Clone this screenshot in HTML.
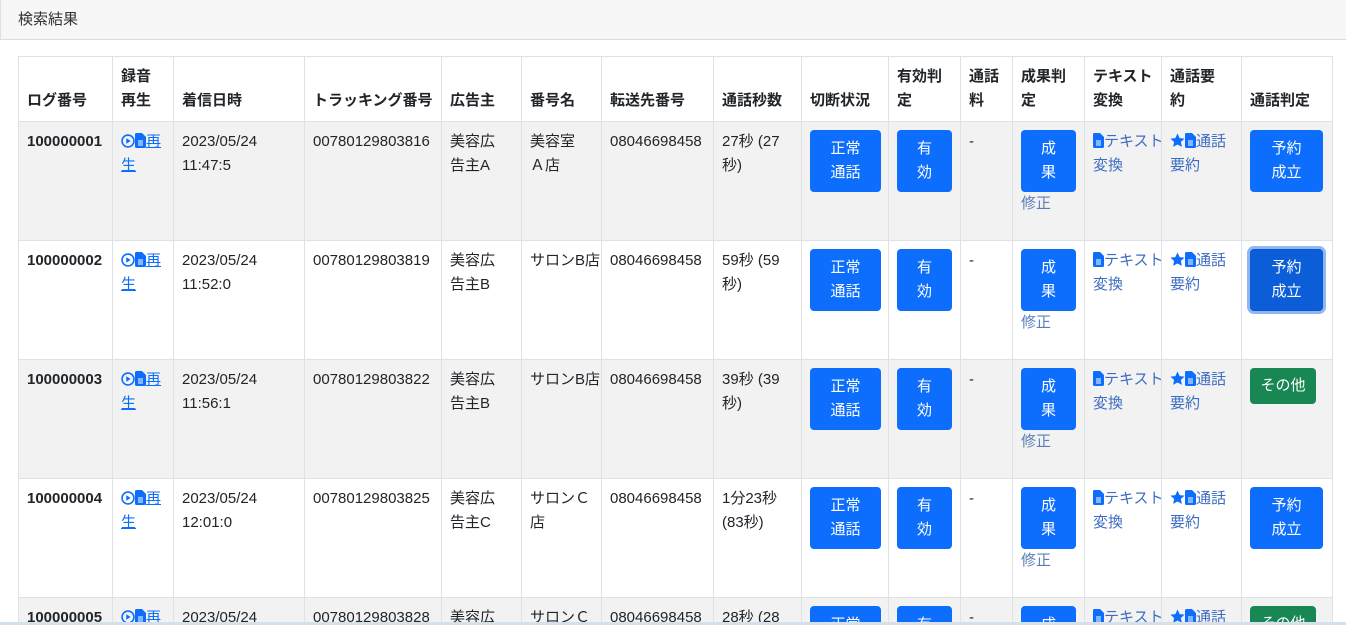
<!DOCTYPE html>
<html><head><meta charset="utf-8"><style>
*{box-sizing:border-box}
html,body{margin:0;width:1346px;height:625px;overflow:hidden}
body{position:relative;background:#fff;font-family:"Liberation Sans","Noto Sans CJK JP",sans-serif;font-size:15px;color:#212529}
.hd{height:40px;background:#f7f7f7;border-bottom:1px solid #dcdcdc;border-left:1px solid #e0e0e0;padding:9px 17px;font-size:15px;line-height:22px;color:#333}
table{position:absolute;left:18px;top:56px;border-collapse:collapse;table-layout:fixed;width:1314px}
td,th{border:1px solid #dee2e6;padding:8px 8px;vertical-align:top;line-height:24px;text-align:left;white-space:nowrap;overflow:hidden}
th{vertical-align:bottom;font-weight:bold;height:65px}
tr.r td{height:119px}
tr.o td{background:#f2f2f2}
td.b{font-weight:bold}
a{color:#0d6efd}
.l{color:#3e6cc0;text-decoration:none}
.m{color:#5b7fb8}
.btn{display:inline-block;background:#0d6efd;color:#fff;border-radius:4px;text-align:center;padding:6px 0;line-height:24px;border:1px solid #0d6efd}
.w71{width:71px}.w55{width:55px}.w73{width:73px}
.g{background:#198754;border-color:#198754;width:66px;padding:5px 0}
.f{background:#0b5ed7;border-color:#0a58ca;box-shadow:0 0 0 3px #8fb6f5}
svg{vertical-align:-2px}
.bar{position:absolute;left:0;top:622px;width:1346px;height:3px;background:#d5e1ea}
</style></head><body>
<div class="hd">検索結果</div>
<table>
<colgroup><col style="width:94px"><col style="width:61px"><col style="width:131px"><col style="width:137px"><col style="width:80px"><col style="width:80px"><col style="width:112px"><col style="width:88px"><col style="width:87px"><col style="width:72px"><col style="width:52px"><col style="width:72px"><col style="width:77px"><col style="width:80px"><col style="width:91px"></colgroup>
<tr><th>ログ番号</th><th>録音<br>再生</th><th>着信日時</th><th>トラッキング番号</th><th>広告主</th><th>番号名</th><th>転送先番号</th><th>通話秒数</th><th>切断状況</th><th>有効判<br>定</th><th>通話<br>料</th><th>成果判<br>定</th><th>テキスト<br>変換</th><th>通話要<br>約</th><th>通話判定</th></tr>
<tr class="r o"><td class="b">100000001</td><td><a href="#"><svg width="14" height="14" viewBox="0 0 16 16"><circle cx="8" cy="8" r="6.8" fill="none" stroke="#0d6efd" stroke-width="1.8"/><path d="M6 4.8v6.4L11 8z" fill="#0d6efd"/></svg><svg width="11" height="15" viewBox="0 0 11 15"><path d="M1.5 0h5.5l4 4v9.5a1.5 1.5 0 0 1-1.5 1.5h-8A1.5 1.5 0 0 1 0 13.5V1.5A1.5 1.5 0 0 1 1.5 0z" fill="#0d6efd"/><path d="M3 8h5M3 10h5M3 12h5" stroke="#fff" stroke-width="1"/></svg>再<br>生</a></td><td>2023/05/24<br>11:47:5</td><td>00780129803816</td><td>美容広<br>告主A</td><td>美容室<br>Ａ店</td><td>08046698458</td><td>27秒 (27<br>秒)</td><td><span class="btn w71">正常<br>通話</span></td><td><span class="btn w55">有<br>効</span></td><td>-</td><td><span class="btn w55">成<br>果</span><br><span class="m">修正</span></td><td><span class="l"><svg width="11" height="15" viewBox="0 0 11 15"><path d="M1.5 0h5.5l4 4v9.5a1.5 1.5 0 0 1-1.5 1.5h-8A1.5 1.5 0 0 1 0 13.5V1.5A1.5 1.5 0 0 1 1.5 0z" fill="#0d6efd"/><path d="M3 8h5M3 10h5M3 12h5" stroke="#fff" stroke-width="1"/></svg>テキスト<br>変換</span></td><td><span class="l"><svg width="15" height="15" viewBox="0 0 16 16"><path d="M8 .5l2.3 4.9 5.2.6-3.9 3.6 1.1 5.2L8 12.2l-4.7 2.6 1.1-5.2L.5 6l5.2-.6z" fill="#0d6efd"/></svg><svg width="11" height="15" viewBox="0 0 11 15"><path d="M1.5 0h5.5l4 4v9.5a1.5 1.5 0 0 1-1.5 1.5h-8A1.5 1.5 0 0 1 0 13.5V1.5A1.5 1.5 0 0 1 1.5 0z" fill="#0d6efd"/><path d="M3 8h5M3 10h5M3 12h5" stroke="#fff" stroke-width="1"/></svg>通話<br>要約</span></td><td><span class="btn w73">予約<br>成立</span></td></tr>
<tr class="r"><td class="b">100000002</td><td><a href="#"><svg width="14" height="14" viewBox="0 0 16 16"><circle cx="8" cy="8" r="6.8" fill="none" stroke="#0d6efd" stroke-width="1.8"/><path d="M6 4.8v6.4L11 8z" fill="#0d6efd"/></svg><svg width="11" height="15" viewBox="0 0 11 15"><path d="M1.5 0h5.5l4 4v9.5a1.5 1.5 0 0 1-1.5 1.5h-8A1.5 1.5 0 0 1 0 13.5V1.5A1.5 1.5 0 0 1 1.5 0z" fill="#0d6efd"/><path d="M3 8h5M3 10h5M3 12h5" stroke="#fff" stroke-width="1"/></svg>再<br>生</a></td><td>2023/05/24<br>11:52:0</td><td>00780129803819</td><td>美容広<br>告主B</td><td>サロンB店</td><td>08046698458</td><td>59秒 (59<br>秒)</td><td><span class="btn w71">正常<br>通話</span></td><td><span class="btn w55">有<br>効</span></td><td>-</td><td><span class="btn w55">成<br>果</span><br><span class="m">修正</span></td><td><span class="l"><svg width="11" height="15" viewBox="0 0 11 15"><path d="M1.5 0h5.5l4 4v9.5a1.5 1.5 0 0 1-1.5 1.5h-8A1.5 1.5 0 0 1 0 13.5V1.5A1.5 1.5 0 0 1 1.5 0z" fill="#0d6efd"/><path d="M3 8h5M3 10h5M3 12h5" stroke="#fff" stroke-width="1"/></svg>テキスト<br>変換</span></td><td><span class="l"><svg width="15" height="15" viewBox="0 0 16 16"><path d="M8 .5l2.3 4.9 5.2.6-3.9 3.6 1.1 5.2L8 12.2l-4.7 2.6 1.1-5.2L.5 6l5.2-.6z" fill="#0d6efd"/></svg><svg width="11" height="15" viewBox="0 0 11 15"><path d="M1.5 0h5.5l4 4v9.5a1.5 1.5 0 0 1-1.5 1.5h-8A1.5 1.5 0 0 1 0 13.5V1.5A1.5 1.5 0 0 1 1.5 0z" fill="#0d6efd"/><path d="M3 8h5M3 10h5M3 12h5" stroke="#fff" stroke-width="1"/></svg>通話<br>要約</span></td><td><span class="btn w73 f">予約<br>成立</span></td></tr>
<tr class="r o"><td class="b">100000003</td><td><a href="#"><svg width="14" height="14" viewBox="0 0 16 16"><circle cx="8" cy="8" r="6.8" fill="none" stroke="#0d6efd" stroke-width="1.8"/><path d="M6 4.8v6.4L11 8z" fill="#0d6efd"/></svg><svg width="11" height="15" viewBox="0 0 11 15"><path d="M1.5 0h5.5l4 4v9.5a1.5 1.5 0 0 1-1.5 1.5h-8A1.5 1.5 0 0 1 0 13.5V1.5A1.5 1.5 0 0 1 1.5 0z" fill="#0d6efd"/><path d="M3 8h5M3 10h5M3 12h5" stroke="#fff" stroke-width="1"/></svg>再<br>生</a></td><td>2023/05/24<br>11:56:1</td><td>00780129803822</td><td>美容広<br>告主B</td><td>サロンB店</td><td>08046698458</td><td>39秒 (39<br>秒)</td><td><span class="btn w71">正常<br>通話</span></td><td><span class="btn w55">有<br>効</span></td><td>-</td><td><span class="btn w55">成<br>果</span><br><span class="m">修正</span></td><td><span class="l"><svg width="11" height="15" viewBox="0 0 11 15"><path d="M1.5 0h5.5l4 4v9.5a1.5 1.5 0 0 1-1.5 1.5h-8A1.5 1.5 0 0 1 0 13.5V1.5A1.5 1.5 0 0 1 1.5 0z" fill="#0d6efd"/><path d="M3 8h5M3 10h5M3 12h5" stroke="#fff" stroke-width="1"/></svg>テキスト<br>変換</span></td><td><span class="l"><svg width="15" height="15" viewBox="0 0 16 16"><path d="M8 .5l2.3 4.9 5.2.6-3.9 3.6 1.1 5.2L8 12.2l-4.7 2.6 1.1-5.2L.5 6l5.2-.6z" fill="#0d6efd"/></svg><svg width="11" height="15" viewBox="0 0 11 15"><path d="M1.5 0h5.5l4 4v9.5a1.5 1.5 0 0 1-1.5 1.5h-8A1.5 1.5 0 0 1 0 13.5V1.5A1.5 1.5 0 0 1 1.5 0z" fill="#0d6efd"/><path d="M3 8h5M3 10h5M3 12h5" stroke="#fff" stroke-width="1"/></svg>通話<br>要約</span></td><td><span class="btn g">その他</span></td></tr>
<tr class="r"><td class="b">100000004</td><td><a href="#"><svg width="14" height="14" viewBox="0 0 16 16"><circle cx="8" cy="8" r="6.8" fill="none" stroke="#0d6efd" stroke-width="1.8"/><path d="M6 4.8v6.4L11 8z" fill="#0d6efd"/></svg><svg width="11" height="15" viewBox="0 0 11 15"><path d="M1.5 0h5.5l4 4v9.5a1.5 1.5 0 0 1-1.5 1.5h-8A1.5 1.5 0 0 1 0 13.5V1.5A1.5 1.5 0 0 1 1.5 0z" fill="#0d6efd"/><path d="M3 8h5M3 10h5M3 12h5" stroke="#fff" stroke-width="1"/></svg>再<br>生</a></td><td>2023/05/24<br>12:01:0</td><td>00780129803825</td><td>美容広<br>告主C</td><td>サロンＣ<br>店</td><td>08046698458</td><td>1分23秒<br>(83秒)</td><td><span class="btn w71">正常<br>通話</span></td><td><span class="btn w55">有<br>効</span></td><td>-</td><td><span class="btn w55">成<br>果</span><br><span class="m">修正</span></td><td><span class="l"><svg width="11" height="15" viewBox="0 0 11 15"><path d="M1.5 0h5.5l4 4v9.5a1.5 1.5 0 0 1-1.5 1.5h-8A1.5 1.5 0 0 1 0 13.5V1.5A1.5 1.5 0 0 1 1.5 0z" fill="#0d6efd"/><path d="M3 8h5M3 10h5M3 12h5" stroke="#fff" stroke-width="1"/></svg>テキスト<br>変換</span></td><td><span class="l"><svg width="15" height="15" viewBox="0 0 16 16"><path d="M8 .5l2.3 4.9 5.2.6-3.9 3.6 1.1 5.2L8 12.2l-4.7 2.6 1.1-5.2L.5 6l5.2-.6z" fill="#0d6efd"/></svg><svg width="11" height="15" viewBox="0 0 11 15"><path d="M1.5 0h5.5l4 4v9.5a1.5 1.5 0 0 1-1.5 1.5h-8A1.5 1.5 0 0 1 0 13.5V1.5A1.5 1.5 0 0 1 1.5 0z" fill="#0d6efd"/><path d="M3 8h5M3 10h5M3 12h5" stroke="#fff" stroke-width="1"/></svg>通話<br>要約</span></td><td><span class="btn w73">予約<br>成立</span></td></tr>
<tr class="r o"><td class="b">100000005</td><td><a href="#"><svg width="14" height="14" viewBox="0 0 16 16"><circle cx="8" cy="8" r="6.8" fill="none" stroke="#0d6efd" stroke-width="1.8"/><path d="M6 4.8v6.4L11 8z" fill="#0d6efd"/></svg><svg width="11" height="15" viewBox="0 0 11 15"><path d="M1.5 0h5.5l4 4v9.5a1.5 1.5 0 0 1-1.5 1.5h-8A1.5 1.5 0 0 1 0 13.5V1.5A1.5 1.5 0 0 1 1.5 0z" fill="#0d6efd"/><path d="M3 8h5M3 10h5M3 12h5" stroke="#fff" stroke-width="1"/></svg>再<br>生</a></td><td>2023/05/24<br>12:05:2</td><td>00780129803828</td><td>美容広<br>告主C</td><td>サロンＣ<br>店</td><td>08046698458</td><td>28秒 (28<br>秒)</td><td><span class="btn w71">正常<br>通話</span></td><td><span class="btn w55">有<br>効</span></td><td>-</td><td><span class="btn w55">成<br>果</span><br><span class="m">修正</span></td><td><span class="l"><svg width="11" height="15" viewBox="0 0 11 15"><path d="M1.5 0h5.5l4 4v9.5a1.5 1.5 0 0 1-1.5 1.5h-8A1.5 1.5 0 0 1 0 13.5V1.5A1.5 1.5 0 0 1 1.5 0z" fill="#0d6efd"/><path d="M3 8h5M3 10h5M3 12h5" stroke="#fff" stroke-width="1"/></svg>テキスト<br>変換</span></td><td><span class="l"><svg width="15" height="15" viewBox="0 0 16 16"><path d="M8 .5l2.3 4.9 5.2.6-3.9 3.6 1.1 5.2L8 12.2l-4.7 2.6 1.1-5.2L.5 6l5.2-.6z" fill="#0d6efd"/></svg><svg width="11" height="15" viewBox="0 0 11 15"><path d="M1.5 0h5.5l4 4v9.5a1.5 1.5 0 0 1-1.5 1.5h-8A1.5 1.5 0 0 1 0 13.5V1.5A1.5 1.5 0 0 1 1.5 0z" fill="#0d6efd"/><path d="M3 8h5M3 10h5M3 12h5" stroke="#fff" stroke-width="1"/></svg>通話<br>要約</span></td><td><span class="btn g">その他</span></td></tr>
</table>
<div class="bar"></div>
</body></html>
